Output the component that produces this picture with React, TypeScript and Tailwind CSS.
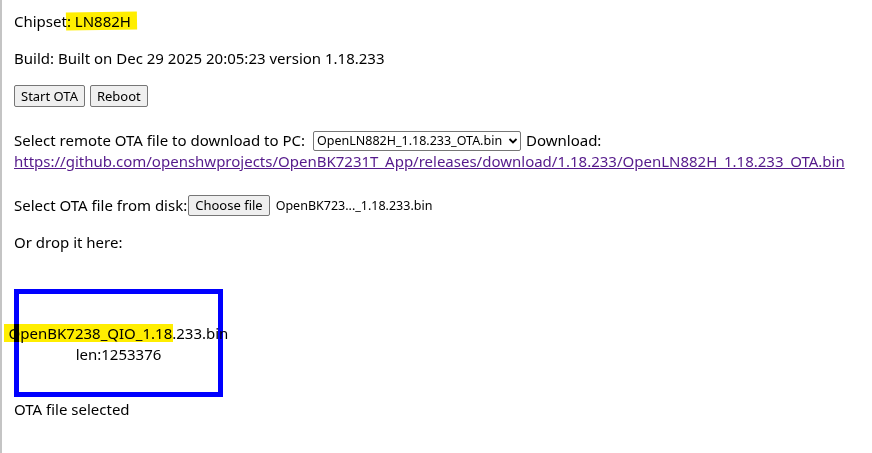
import React from "react";

function Hl({ children, className }: { children: React.ReactNode; className: string }) {
  return (
    <span className="relative">
      {children}
      <span className={"absolute bg-[#ffee00] mix-blend-multiply pointer-events-none " + className} />
    </span>
  );
}

export default function App() {
  const font = { fontFamily: '"Noto Sans", "Open Sans", sans-serif' };
  return (
    <div className="w-[872px] h-[453px] bg-white text-[15px] text-black border-l-2 border-[#c4c4c4] overflow-hidden relative" style={font}>
      <div className="pl-[12px] pt-[11px] leading-[21px]">
        <div>
          Chipset<Hl className="-left-[1px] -right-[6px] top-[1px] bottom-[1px] -rotate-1">: LN882H</Hl>
        </div>
        <div className="mt-[16px]">Build: Built on Dec 29 2025 20:05:23 version 1.18.233</div>
        <div className="mt-[16px] flex gap-[5px] items-center">
          <button className="h-[22px] px-[6px] text-[13px] bg-[#efefef] border border-[#767676] rounded-[2px] leading-none">Start OTA</button>
          <button className="h-[22px] px-[6px] text-[13px] bg-[#efefef] border border-[#767676] rounded-[2px] leading-none">Reboot</button>
        </div>
        <div className="mt-[23px] flex items-center">
          <span>Select remote OTA file to download to PC:</span>
          <span className="ml-[8px] h-[20px] w-[208px] border border-[#767676] rounded-[2px] text-[12.5px] flex items-center pl-[3px] pr-[2px] justify-between">
            <span>OpenLN882H_1.18.233_OTA.bin</span>
            <svg width="10" height="10" viewBox="0 0 10 10"><path d="M1.5 3 L5 6.5 L8.5 3" stroke="black" strokeWidth="1.8" fill="none" /></svg>
          </span>
          <span className="ml-[5px]">Download:</span>
        </div>
        <div>
          <a className="text-[#551a8b] underline" href="#">https://github.com/openshwprojects/OpenBK7231T_App/releases/download/1.18.233/OpenLN882H_1.18.233_OTA.bin</a>
        </div>
        <div className="mt-[23px] flex items-center">
          <span>Select OTA file from disk:</span>
          <button className="ml-[1px] h-[21px] px-[6px] text-[13px] bg-[#efefef] border border-[#767676] rounded-[2px] leading-none">Choose file</button>
          <span className="ml-[6px] text-[12.5px]">OpenBK723..._1.18.233.bin</span>
        </div>
        <div className="mt-[16px]">Or drop it here:</div>
        <div className="mt-[36px] w-[209px] h-[108px] border-[5px] border-[#0000ff] flex flex-col items-center justify-center">
          <div className="whitespace-nowrap mt-[2px]">
            <Hl className="-left-[5px] -right-[1px] top-[1px] bottom-[1px]">OpenBK7238_QIO_1.18</Hl>.233.bin
          </div>
          <div>len:1253376</div>
        </div>
        <div className="mt-[2px]">OTA file selected</div>
      </div>
    </div>
  );
}
